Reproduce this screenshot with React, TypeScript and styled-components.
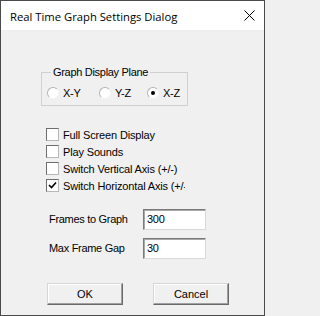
import React from "react";
import styled, { createGlobalStyle } from "styled-components";

const GlobalStyle = createGlobalStyle`
  html, body {
    margin: 0;
    padding: 0;
    background: #f0f0f0;
  }
  * {
    box-sizing: border-box;
  }
`;

const Window = styled.div`
  width: 265px;
  height: 316px;
  border: 1px solid #4a4a4a;
  background: #f0f0f0;
  display: flex;
  flex-direction: column;
  font-family: "Liberation Sans", Arial, sans-serif;
  font-size: 11px;
  letter-spacing: -0.3px;
  color: #000;
  overflow: hidden;
`;

const TitleBar = styled.div`
  height: 29px;
  background: #fff;
  display: flex;
  align-items: center;
  justify-content: space-between;
  padding: 0 9px 0 9px;
`;

const Title = styled.span`
  font-family: "Open Sans", "Noto Sans", sans-serif;
  font-size: 11.25px;
  letter-spacing: 0;
  padding-top: 1px;
`;

const CloseIcon = styled.svg`
  width: 11px;
  height: 11px;
`;

const Body = styled.div`
  flex: 1;
  display: flex;
  flex-direction: column;
  padding: 36px 0 0 40px;
`;

const GroupBox = styled.fieldset`
  width: 147px;
  height: 40px;
  margin: 0;
  padding: 0 0 0 5px;
  border: 1px solid #d0d0d0;
`;

const Legend = styled.legend`
  padding: 0 2px 0 2px;
  margin-left: 4px;
  line-height: 13px;
`;

const RadioRow = styled.div`
  display: grid;
  grid-template-columns: 52px 48px auto;
  margin-top: 8px;
`;

const Choice = styled.label`
  display: flex;
  align-items: center;
  gap: 4px;
  height: 12px;
`;

const RadioDot = styled.span<{ $on?: boolean }>`
  flex: none;
  width: 12px;
  height: 12px;
  border-radius: 50%;
  border: 1px solid;
  border-color: #b4b4b4 #f4f4f4 #f4f4f4 #b4b4b4;
  background: #fff;
  display: flex;
  align-items: center;
  justify-content: center;

  &::after {
    content: "";
    width: 4px;
    height: 4px;
    border-radius: 50%;
    background: ${(p) => (p.$on ? "#000" : "transparent")};
  }
`;

const CheckList = styled.div`
  display: flex;
  flex-direction: column;
  margin: 20px 0 0 5px;
`;

const CheckRow = styled.label`
  height: 17px;
  display: flex;
  align-items: center;
  gap: 4px;
`;

const CheckBox = styled.span`
  flex: none;
  width: 13px;
  height: 13px;
  border: 1px solid;
  border-color: #6e6e6e #b8b8b8 #b8b8b8 #6e6e6e;
  background: #fff;
  display: flex;
  align-items: center;
  justify-content: center;
`;

const CheckText = styled.span`
  width: 122px;
  letter-spacing: -0.15px;
  white-space: nowrap;
  overflow: hidden;
`;

const Fields = styled.div`
  display: grid;
  grid-template-columns: 94px 63px;
  row-gap: 8px;
  margin: 15px 0 0 8px;
  align-items: center;
`;

const FieldLabel = styled.span`
  line-height: 21px;
`;

const Input = styled.div`
  height: 21px;
  border: 1px solid;
  border-color: #7a7a7a #d8d8d8 #d8d8d8 #7a7a7a;
  box-shadow: inset 1px 1px 0 #a8a8a8;
  background: #fff;
  padding: 3px 0 0 3px;
  line-height: 13px;
`;

const ButtonRow = styled.div`
  display: flex;
  gap: 30px;
  margin: 24px 0 0 6px;
`;

const Button = styled.button`
  width: 76px;
  height: 22px;
  padding: 0;
  font: inherit;
  color: #000;
  background: #f0f0f0;
  border: 1px solid;
  border-color: #d6d6d6 #696969 #696969 #d6d6d6;
  box-shadow: inset -1px -1px 0 #a0a0a0, inset 1px 1px 0 #fff;
`;

const Check = () => (
  <svg width="9" height="9" viewBox="0 0 9 9">
    <path d="M1 4 L3.5 6.5 L8 1.5" fill="none" stroke="#000" strokeWidth="1.6" />
  </svg>
);

const options = [
  { label: "Full Screen Display", on: false },
  { label: "Play Sounds", on: false },
  { label: "Switch Vertical Axis (+/-)", on: false },
  { label: "Switch Horizontal Axis (+/-)", on: true },
];

const planes = [
  { label: "X-Y", on: false },
  { label: "Y-Z", on: false },
  { label: "X-Z", on: true },
];

const App: React.FC = () => (
  <Window>
    <GlobalStyle />
    <TitleBar>
      <Title>Real Time Graph Settings Dialog</Title>
      <CloseIcon viewBox="0 0 11 11">
        <path d="M0.5 0.5 L10.5 10.5 M10.5 0.5 L0.5 10.5" stroke="#000" strokeWidth="1" />
      </CloseIcon>
    </TitleBar>
    <Body>
      <GroupBox>
        <Legend>Graph Display Plane</Legend>
        <RadioRow>
          {planes.map((p) => (
            <Choice key={p.label}>
              <RadioDot $on={p.on} />
              {p.label}
            </Choice>
          ))}
        </RadioRow>
      </GroupBox>
      <CheckList>
        {options.map((o) => (
          <CheckRow key={o.label}>
            <CheckBox>{o.on && <Check />}</CheckBox>
            <CheckText>{o.label}</CheckText>
          </CheckRow>
        ))}
      </CheckList>
      <Fields>
        <FieldLabel>Frames to Graph</FieldLabel>
        <Input>300</Input>
        <FieldLabel>Max Frame Gap</FieldLabel>
        <Input>30</Input>
      </Fields>
      <ButtonRow>
        <Button>OK</Button>
        <Button>Cancel</Button>
      </ButtonRow>
    </Body>
  </Window>
);

export default App;
